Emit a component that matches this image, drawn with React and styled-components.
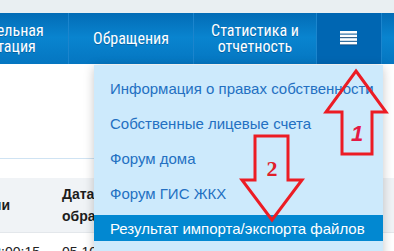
import React from 'react';
import styled, { createGlobalStyle } from 'styled-components';

const GlobalStyle = createGlobalStyle`
  html, body {
    margin: 0;
    padding: 0;
    background: #fff;
  }
  body {
    font-family: "Liberation Sans", Arial, sans-serif;
  }
`;

const Page = styled.div`
  position: relative;
  width: 394px;
  height: 251px;
  overflow: hidden;
  background: #fff;
`;

const TopStrip = styled.div`
  height: 13px;
  background: #e9eff2;
`;

const Nav = styled.nav`
  display: flex;
  height: 51px;
  margin-left: -92px;
  background: linear-gradient(#036cb6 0%, #0984cf 48%, #0576c1 100%);
`;

const NavCell = styled.div`
  flex: 0 0 ${(p) => p.$w}px;
  min-width: 0;
  display: flex;
  align-items: center;
  justify-content: center;
  box-sizing: border-box;
  border-left: ${(p) => (p.$first ? 'none' : '1px solid #1c85cd')};
  background: ${(p) => (p.$active ? '#0066b2' : 'transparent')};
  color: #fff;
  font-family: "Liberation Sans Narrow", "Roboto Condensed", Roboto, sans-serif;
  font-size: 16px;
  line-height: 16px;
  text-align: center;
  white-space: nowrap;
  text-shadow: 0 1px 0 rgba(0, 40, 90, 0.35);
`;

const Content = styled.div`
  padding-top: 94px;
`;

const TabLine = styled.div`
  height: 1px;
  margin-right: 300px;
  background: #cfe3f3;
`;

const Table = styled.div`
  margin-top: 19px;
  display: grid;
  grid-template-columns: 52px 1fr;
`;

const HeadCell = styled.div`
  height: 55px;
  display: flex;
  align-items: center;
  justify-content: ${(p) => (p.$right ? 'flex-end' : 'flex-start')};
  padding: 0 ${(p) => (p.$right ? 45 : 10)}px 0 10px;
  background: #f0f3f6;
  border-right: ${(p) => (p.$right ? '1px solid #e1e5ea' : 'none')};
  border-bottom: 1px solid #e3e7eb;
  box-sizing: border-box;
  overflow: hidden;
  font-size: 14px;
  font-weight: bold;
  line-height: 22px;
  color: #1c1c1c;
  white-space: nowrap;
`;

const BodyCell = styled.div`
  display: flex;
  justify-content: ${(p) => (p.$right ? 'flex-end' : 'flex-start')};
  padding: 11px ${(p) => (p.$right ? 12 : 10)}px 0 10px;
  font-size: 14px;
  color: #222;
  white-space: nowrap;
  overflow: hidden;
`;

const Dropdown = styled.ul`
  position: absolute;
  top: 65px;
  left: 94px;
  width: 289px;
  height: 200px;
  margin: 0;
  padding: 10px 0 0;
  list-style: none;
  background: #cdeafc;
  box-shadow: 0 2px 10px rgba(0, 0, 0, 0.22);
  overflow: hidden;
`;

const MenuItem = styled.li`
  height: 26px;
  margin-bottom: 9px;
  padding-left: 16px;
  display: flex;
  align-items: center;
  white-space: nowrap;
  font-size: 15px;
  font-weight: normal;
  color: ${(p) => (p.$active ? '#fff' : '#2370c2')};
  background: ${(p) => (p.$active ? '#0288d1' : 'transparent')};
`;

const Overlay = styled.svg`
  position: absolute;
  top: 0;
  left: 0;
  pointer-events: none;
`;

const menu = [
  'Информация о правах собственности',
  'Собственные лицевые счета',
  'Форум дома',
  'Форум ГИС ЖКХ',
  'Результат импорта/экспорта файлов',
];

const MenuIcon = () => (
  <svg width="18" height="15" viewBox="0 0 18 15">
    {[0, 1, 2, 3].map((i) => (
      <g key={i}>
        <rect x="0" y={i * 3.6 + 2.4} width="17" height="1" fill="#0b3f70" />
        <rect x="0" y={i * 3.6} width="17" height="2.6" fill="#fff" />
      </g>
    ))}
  </svg>
);

const App = () => (
  <Page>
    <GlobalStyle />
    <TopStrip />
    <Nav>
      <NavCell $first $w={160}>
        Разрешительная
        <br />
        документация
      </NavCell>
      <NavCell $w={125}>Обращения</NavCell>
      <NavCell $w={123}>
        Статистика и
        <br />
        отчетность
      </NavCell>
      <NavCell $active $w={65}>
        <MenuIcon />
      </NavCell>
      <NavCell $w={100} />
    </Nav>
    <Content>
      <TabLine />
      <Table>
        <HeadCell $right>Статус операции</HeadCell>
        <HeadCell>
          Дата начала
          <br />
          обработки
        </HeadCell>
        <BodyCell $right>05.10.2016 12:00:15</BodyCell>
        <BodyCell>05.10.2016 12:00:16</BodyCell>
      </Table>
    </Content>
    <Dropdown>
      {menu.map((item, i) => (
        <MenuItem key={item} $active={i === menu.length - 1}>
          {item}
        </MenuItem>
      ))}
    </Dropdown>
    <Overlay width="394" height="251" viewBox="0 0 394 251">
      <polygon
        points="356,71 386,112 372,112 372,154 342,154 342,112 326,112"
        fill="none"
        stroke="#ec1c24"
        strokeWidth="3"
      />
      <text
        x="357"
        y="141"
        textAnchor="middle"
        fontFamily="Liberation Sans, sans-serif"
        fontStyle="italic"
        fontWeight="bold"
        fontSize="22"
        fill="#e41a44"
      >
        1
      </text>
      <polygon
        points="255,136 288,136 288,180 302,180 272,220 242,180 255,180"
        fill="none"
        stroke="#ec1c24"
        strokeWidth="3"
      />
      <text
        x="272"
        y="176"
        textAnchor="middle"
        fontFamily="Liberation Serif, serif"
        fontWeight="bold"
        fontSize="22"
        fill="#e0202a"
      >
        2
      </text>
    </Overlay>
  </Page>
);

export default App;
